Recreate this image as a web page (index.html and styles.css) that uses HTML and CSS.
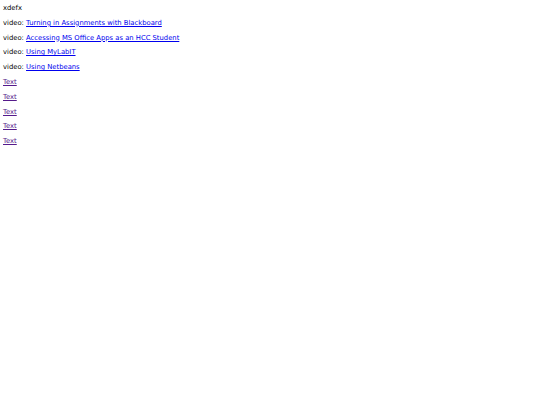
FILE: index.html
```html
<!DOCTYPE html>
<html>
<head>
<meta charset="utf-8">
<link rel="stylesheet" href="styles.css">
</head>
<body>
<div class="list">
<div class="row">xdefx</div>
<div class="row">video: <a class="vid" href="#">Turning in Assignments with Blackboard</a></div>
<div class="row">video: <a class="vid" href="#">Accessing MS Office Apps as an HCC Student</a></div>
<div class="row">video: <a class="vid" href="#">Using MyLabIT</a></div>
<div class="row">video: <a class="vid" href="#">Using Netbeans</a></div>
<div class="row"><a class="txt" href="#">Text</a></div>
<div class="row"><a class="txt" href="#">Text</a></div>
<div class="row"><a class="txt" href="#">Text</a></div>
<div class="row"><a class="txt" href="#">Text</a></div>
<div class="row"><a class="txt" href="#">Text</a></div>
</div>
</body>
</html>
```
FILE: styles.css
```css
body {
  margin: 0;
  background: #fff;
  font-family: "DejaVu Sans", Verdana, sans-serif;
  font-size: 6.8px;
  color: #000;
}
.list {
  display: flex;
  flex-direction: column;
  padding: 1px 3px 0;
}
.row {
  line-height: 14.8px;
}
.vid { color: #0000ee; text-decoration: underline; }
.txt { color: #551a8b; text-decoration: underline; }
```
